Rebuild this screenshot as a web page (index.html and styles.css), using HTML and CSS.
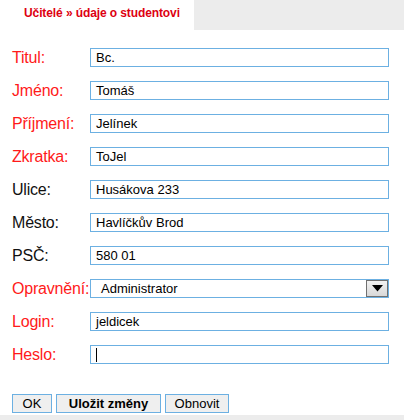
FILE: index.html
```html
<!DOCTYPE html>
<html>
<head>
<meta charset="utf-8">
<link rel="stylesheet" href="styles.css">
</head>
<body>
<div class="header">
  <div class="tab">Učitelé » údaje o studentovi</div>
  <div class="tab-fill"></div>
</div>
<form class="form">
  <label class="lbl req">Titul:</label><div class="field">Bc.</div>
  <label class="lbl req">Jméno:</label><div class="field">Tomáš</div>
  <label class="lbl req">Příjmení:</label><div class="field">Jelínek</div>
  <label class="lbl req">Zkratka:</label><div class="field">ToJel</div>
  <label class="lbl">Ulice:</label><div class="field">Husákova 233</div>
  <label class="lbl">Město:</label><div class="field">Havlíčkův Brod</div>
  <label class="lbl">PSČ:</label><div class="field">580 01</div>
  <label class="lbl req">Opravnění:</label>
  <div class="field select"><span class="sel-text">Administrator</span><span class="sel-btn"><svg width="11" height="7" viewBox="0 0 11 7"><path d="M0 0H11L5.5 6.5Z" fill="#000"/></svg></span></div>
  <label class="lbl req">Login:</label><div class="field">jeldicek</div>
  <label class="lbl req">Heslo:</label><div class="field"><span class="caret"></span></div>
</form>
<div class="buttons">
  <div class="btn">OK</div>
  <div class="btn bold">Uložit změny</div>
  <div class="btn">Obnovit</div>
</div>
<div class="footer"></div>
</body>
</html>
```
FILE: styles.css
```css
html, body { margin: 0; padding: 0; background: #fff; }
body { font-family: "Liberation Sans", Arial, sans-serif; width: 404px; height: 420px; overflow: hidden; }
.header { display: flex; height: 30px; }
.tab { width: 170px; padding: 6px 0 0 24px; font-size: 12px; font-weight: bold; color: #dd0011; letter-spacing: -0.1px; }
.tab-fill { flex: 1; background: #ececec; }
.form { display: grid; grid-template-columns: 78px 299px; row-gap: 14px; padding: 18px 0 0 12px; }
.lbl { font-size: 16px; color: #111; line-height: 19px; height: 19px; letter-spacing: -0.2px; }
.lbl.req { color: #ff1a1a; }
.field { box-sizing: border-box; height: 19px; border: 1px solid #6cb0e2; font-size: 13px; line-height: 17px; padding-left: 5px; color: #000; display: flex; align-items: center; }
.select { padding-left: 10px; padding-right: 0; }
.sel-text { flex: 1; }
.sel-btn { box-sizing: border-box; width: 22px; height: 17px; border: 1px solid #707070; background: linear-gradient(#f2f2f2, #d8d8d8); display: flex; align-items: center; justify-content: center; }
.caret { display: block; width: 1px; height: 14px; background: #000; margin-left: 0; }
.buttons { display: flex; gap: 4px; padding: 30px 0 0 12px; }
.btn { box-sizing: border-box; height: 19px; border: 1px solid #6cb0e2; background: #efefef; font-size: 13px; line-height: 17px; text-align: center; color: #000; }
.btn:nth-child(1) { width: 40px; }
.btn:nth-child(2) { width: 105px; }
.btn:nth-child(3) { width: 64px; }
.bold { font-weight: bold; }
.footer { margin-top: 2px; height: 10px; background: #ececec; }
```
